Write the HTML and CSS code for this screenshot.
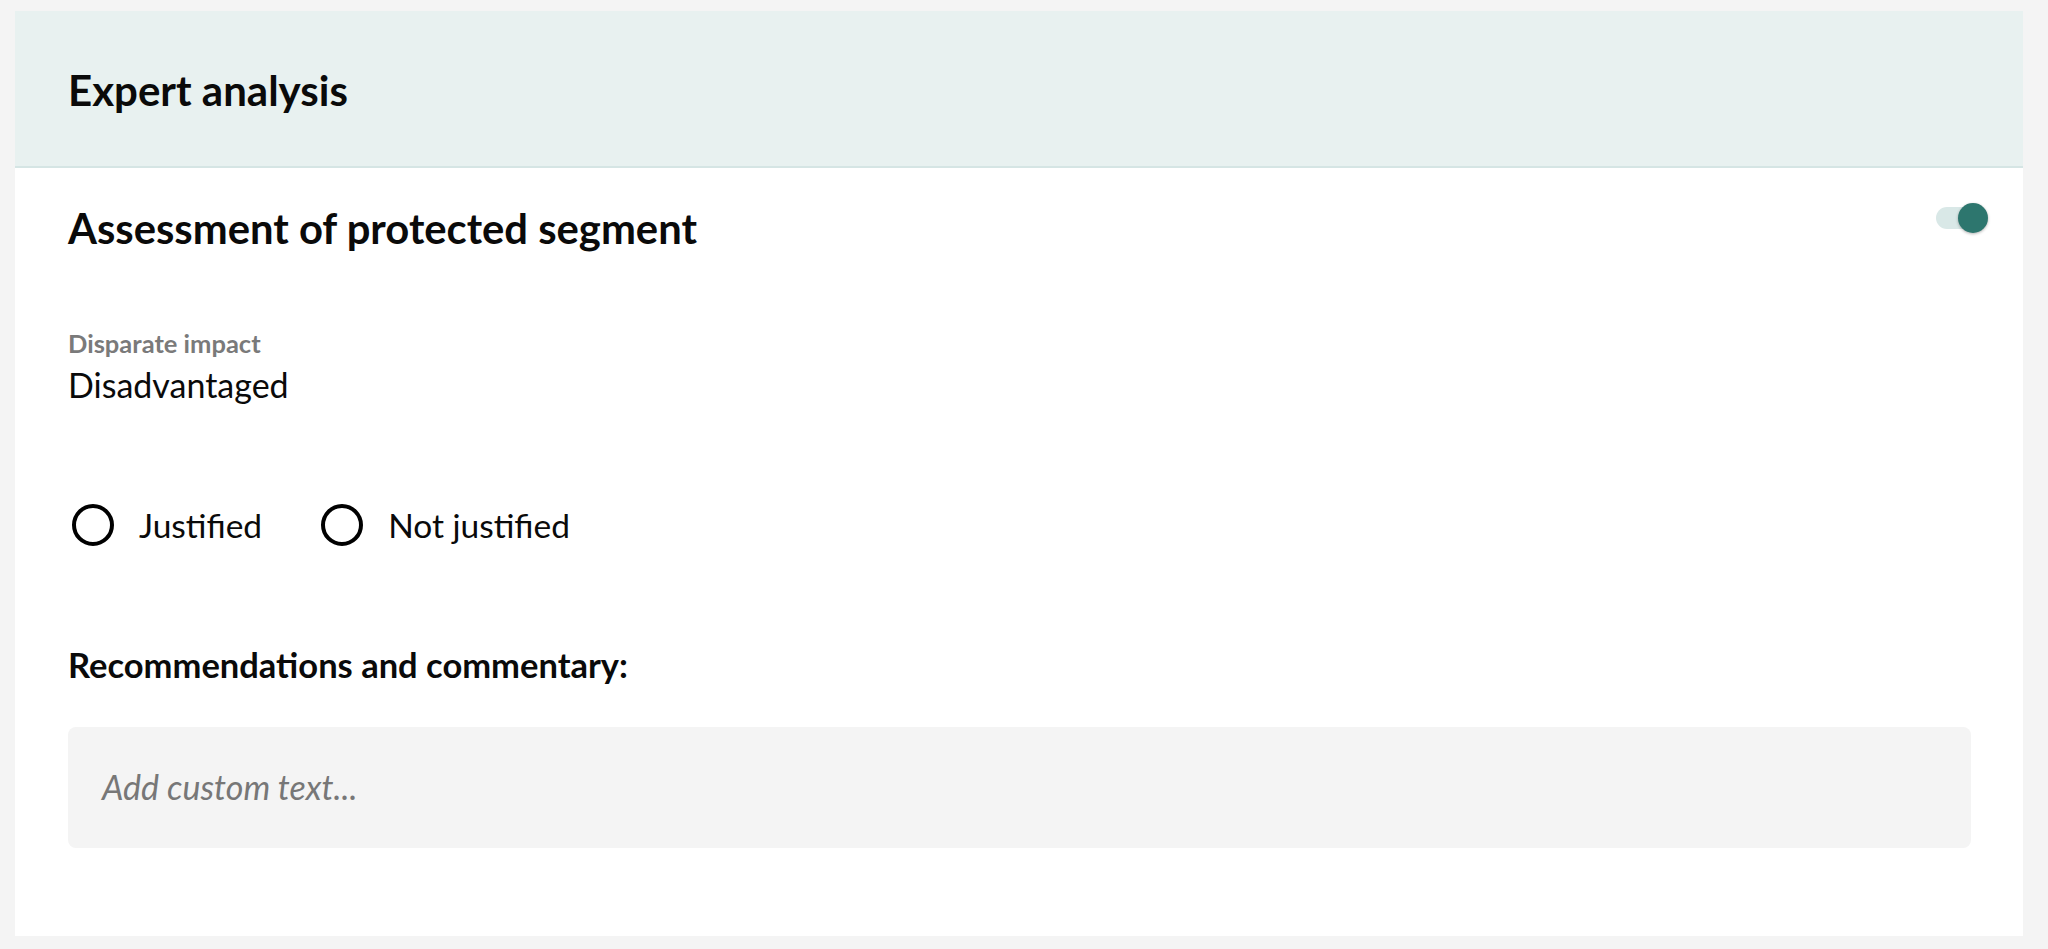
FILE: index.html
```html
<!DOCTYPE html>
<html lang="en">
<head>
<meta charset="utf-8">
<title>Expert analysis</title>
<link rel="stylesheet" href="styles.css">
</head>
<body>
<div class="card">
  <div class="card-header">
    <h2 class="card-title">Expert analysis</h2>
  </div>
  <div class="card-body">
    <div class="section-head">
      <h3 class="section-title">Assessment of protected segment</h3>
      <span class="toggle"><span class="toggle-knob"></span></span>
    </div>
    <div class="field">
      <div class="field-label">Disparate impact</div>
      <div class="field-value">Disadvantaged</div>
    </div>
    <div class="radios">
      <label class="radio"><span class="radio-circle"></span><span class="radio-text">Justified</span></label>
      <label class="radio"><span class="radio-circle"></span><span class="radio-text">Not justified</span></label>
    </div>
    <div class="rec-label">Recommendations and commentary:</div>
    <div class="textarea">Add custom text...</div>
  </div>
</div>
</body>
</html>
```

FILE: styles.css
```css
* { box-sizing: border-box; }

html, body { margin: 0; }

body {
  background: #f4f4f4;
  padding: 11px 25px 14px 15px;
  font-family: Lato, "Open Sans", sans-serif;
  color: #0a0a0a;
}

.card {
  background: #fff;
}

.card-header {
  background: #e8f1f0;
  border-bottom: 2px solid #d5e5e4;
  padding: 55px 53px 52px;
}

.card-title {
  margin: 0;
  font-size: 42px;
  line-height: 48px;
  font-weight: 700;
  color: #0a0a0a;
}

.card-body {
  padding: 36px 52px 88px 53px;
}

.section-head {
  display: flex;
  justify-content: space-between;
  align-items: flex-start;
}

.section-title {
  margin: 0;
  font-size: 41.75px;
  line-height: 48px;
  font-weight: 700;
  color: #0a0a0a;
}

.toggle {
  position: relative;
  width: 48px;
  height: 22px;
  margin-top: 3px;
  margin-right: -13px;
  border-radius: 11px;
  background: #d9e8e7;
}

.toggle-knob {
  position: absolute;
  right: -4px;
  top: -4px;
  width: 30px;
  height: 30px;
  border-radius: 50%;
  background: #2d766e;
  box-shadow: 0 1px 3px rgba(0, 0, 0, 0.3);
}

.field {
  margin-top: 76px;
}

.field-label {
  font-size: 25.5px;
  line-height: 30px;
  font-weight: 700;
  color: #7a7a7a;
}

.field-value {
  margin-top: 6px;
  font-size: 34px;
  line-height: 42px;
}

.radios {
  display: flex;
  gap: 55px;
  margin-top: 98px;
}

.radio {
  display: flex;
  align-items: center;
  gap: 25px;
}

.radio-circle {
  width: 42px;
  height: 42px;
  margin-left: 4px;
  border: 4px solid #000;
  border-radius: 50%;
}

.radio-text {
  font-size: 33.5px;
  line-height: 42px;
}

.rec-label {
  margin-top: 99px;
  font-size: 34.5px;
  line-height: 40px;
  font-weight: 700;
}

.textarea {
  margin-top: 42px;
  height: 121px;
  padding: 40px 34px;
  background: #f4f4f4;
  border-radius: 8px;
  font-size: 34px;
  line-height: 40px;
  font-style: italic;
  color: #777;
}
```
